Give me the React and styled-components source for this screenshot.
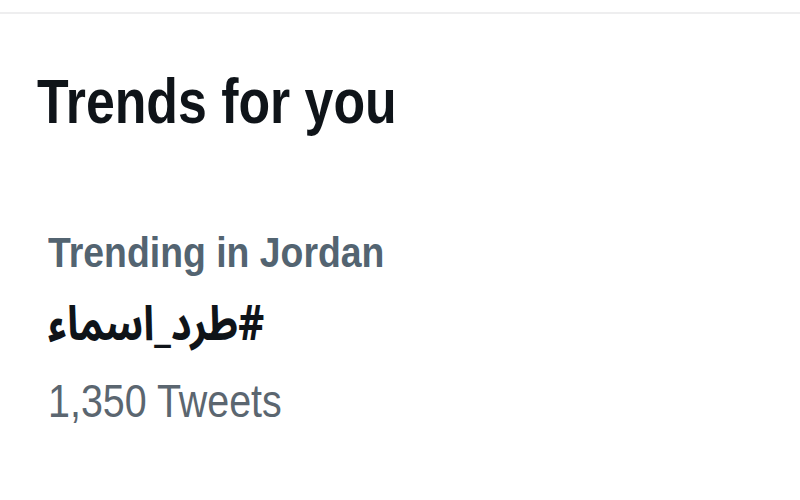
import styled, { createGlobalStyle } from 'styled-components'

const GlobalStyle = createGlobalStyle`
  html, body {
    margin: 0;
    padding: 0;
    background: #ffffff;
  }
  body {
    font-family: "Liberation Sans", Arial, sans-serif;
  }
`

const Page = styled.div`
  width: 800px;
  height: 500px;
  padding-top: 12px;
  box-sizing: border-box;
  background: #ffffff;
  overflow: hidden;
`

const Panel = styled.section`
  border-top: 2px solid #eeeeef;
  display: flex;
  flex-direction: column;
`

// the screenshot is squeezed sideways, so every line is narrowed a little
const Squeeze = styled.span`
  display: inline-block;
  transform: scaleX(${p => p.$x});
  transform-origin: left center;
  white-space: nowrap;
`

const Title = styled.h2`
  margin: 56px 0 0 37px;
  font-size: 63px;
  line-height: 1;
  font-weight: 700;
  color: #0f1419;
`

const Trend = styled.div`
  margin: 99px 0 0 48px;
  display: flex;
  flex-direction: column;
  align-items: flex-start;
`

const Context = styled.div`
  font-size: 42px;
  line-height: 1;
  font-weight: 700;
  color: #536471;
`

const Hashtag = styled.div`
  margin-top: 27px;
  font-family: "Noto Sans Arabic", "DejaVu Sans", sans-serif;
  font-size: 48px;
  line-height: 1;
  font-weight: 700;
  color: #0f1419;
`

const Count = styled.div`
  margin-top: 29px;
  font-size: 46px;
  line-height: 1;
  font-weight: 400;
  color: #5b6670;
`

export default function App() {
  return (
    <Page>
      <GlobalStyle />
      <Panel>
        <Title>
          <Squeeze $x={0.822}>Trends for you</Squeeze>
        </Title>
        <Trend>
          <Context>
            <Squeeze $x={0.89}>Trending in Jordan</Squeeze>
          </Context>
          <Hashtag>
            <Squeeze $x={0.84} dir="rtl">#طرد_اسماء</Squeeze>
          </Hashtag>
          <Count>
            <Squeeze $x={0.857}>1,350 Tweets</Squeeze>
          </Count>
        </Trend>
      </Panel>
    </Page>
  )
}
